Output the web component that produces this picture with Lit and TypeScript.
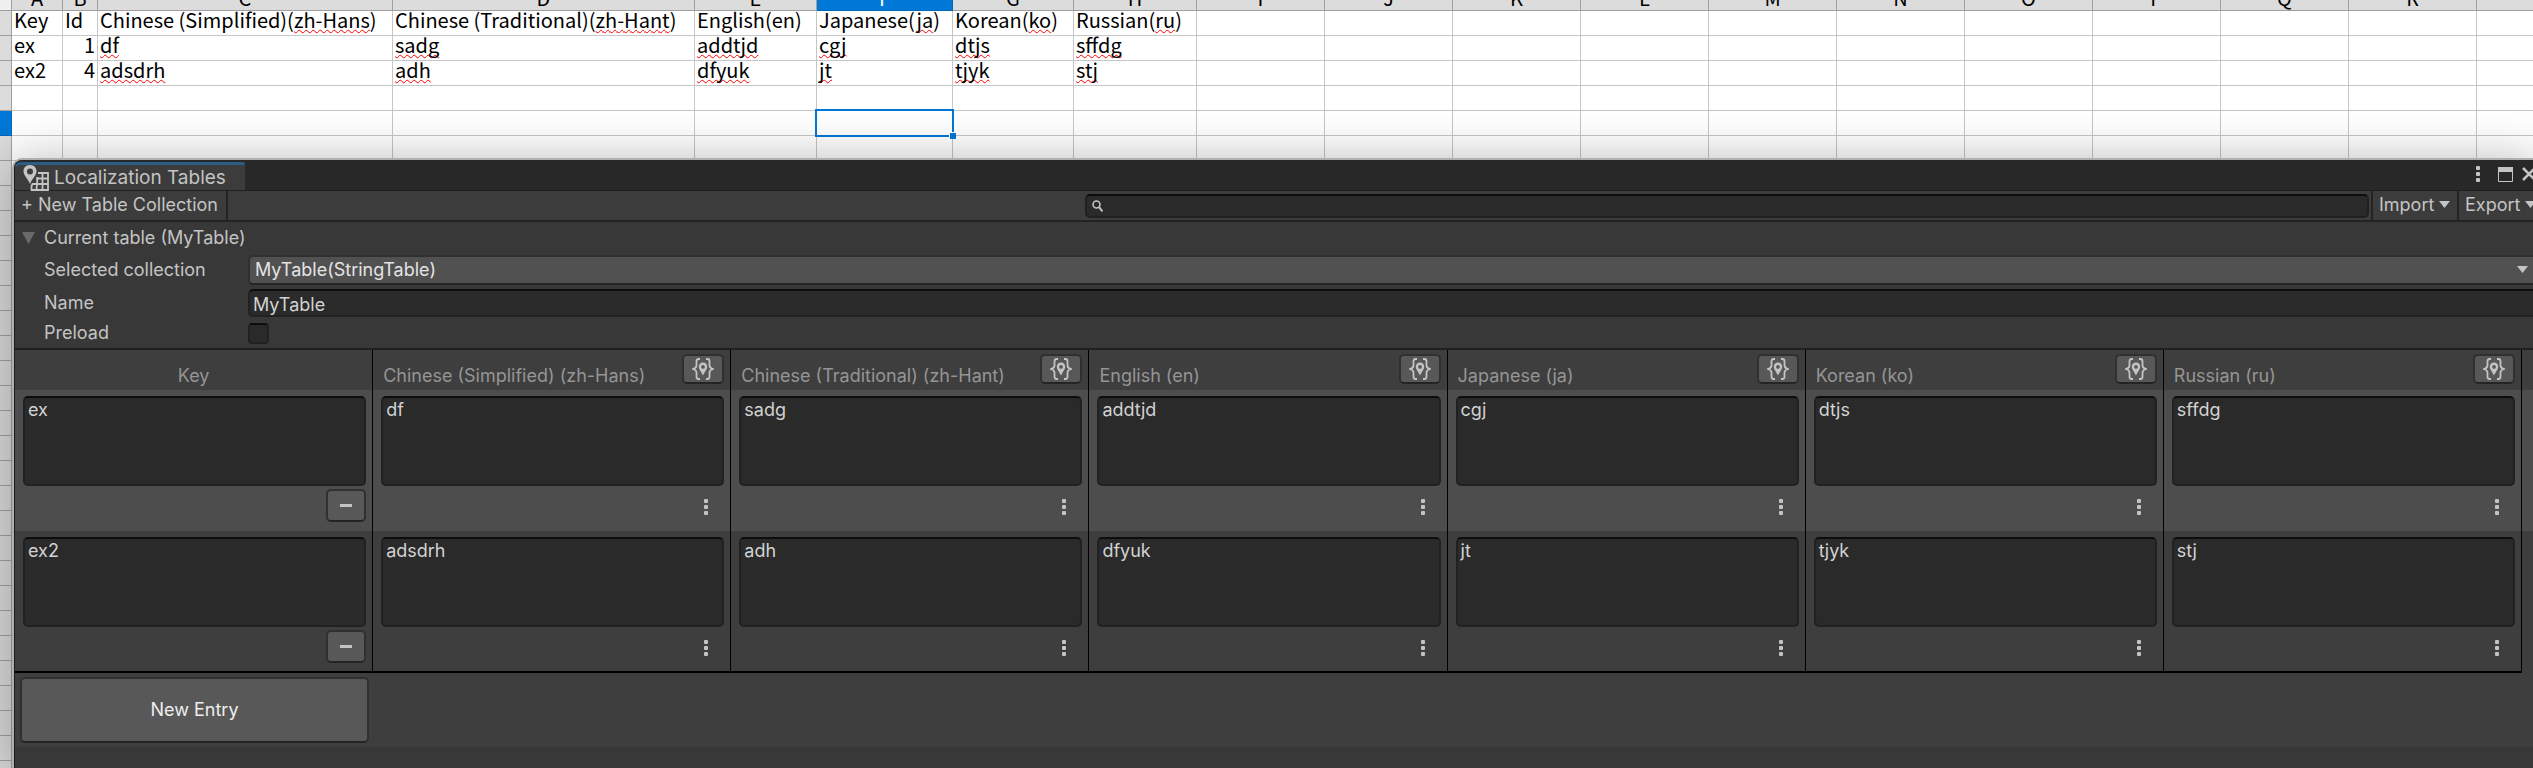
import { LitElement, html, css, svg } from "lit";
import { customElement } from "lit/decorators.js";
import { classMap } from "lit/directives/class-map.js";

type Col = { letter: string; width: number };

const COLUMNS: Col[] = [
  { letter: "A", width: 51 },
  { letter: "B", width: 35 },
  { letter: "C", width: 295 },
  { letter: "D", width: 302 },
  { letter: "E", width: 122 },
  { letter: "F", width: 136 },
  { letter: "G", width: 121 },
  { letter: "H", width: 123 },
  ..."IJKLMNOPQRS".split("").map((letter) => ({ letter, width: 128 })),
];

// Each cell is [plain part, misspelt part, plain tail].
const CELLS: string[][][] = [
  [["Key"], ["Id"], ["Chinese (Simplified)(", "zh-Hans", ")"], ["Chinese (Traditional)(", "zh-Hant", ")"], ["English(en)"], ["Japanese(", "ja", ")"], ["Korean(", "ko", ")"], ["Russian(", "ru", ")"]],
  [["ex"], ["1"], ["", "df"], ["", "sadg"], ["", "addtjd"], ["", "cgj"], ["", "dtjs"], ["", "sffdg"]],
  [["ex2"], ["4"], ["", "adsdrh"], ["", "adh"], ["", "dfyuk"], ["", "jt"], ["", "tjyk"], ["", "stj"]],
];
const ROW_COUNT = 31;
const ACTIVE_ROW = 4;
const ACTIVE_COL = 5;

@customElement("sheet-view")
export class SheetView extends LitElement {
  static styles = css`
    :host {
      display: block;
      color: #000;
      font: 20px/18px "Noto Sans CJK SC", "Noto Sans", sans-serif;
    }
    .clip { overflow: hidden; }
    table {
      border-collapse: separate;
      border-spacing: 0;
      table-layout: fixed;
      width: 0;
      margin-top: -14px;
    }
    th, td { padding: 0; height: 24px; box-sizing: content-box; font-weight: 400; white-space: nowrap; vertical-align: top; }
    th { background: #dcdcdc; border-right: 1px solid #a0a0a0; border-bottom: 1px solid #a0a0a0; vertical-align: middle; }
    thead th:first-child { background: #f0f0f0; }
    td { background: #fff; border-right: 1px solid #c6c6c6; border-bottom: 1px solid #c6c6c6; }
    .text { padding: 0 2px; }
    .number { text-align: right; padding: 0 2px; }
    .current { background: #0078d7; color: #fff; border-color: #0067b8; }
    .bad {
      text-decoration: underline wavy #f00 1px;
      text-decoration-skip-ink: none;
      text-underline-offset: 1px;
    }
    .active { position: relative; }
    .cursor {
      position: absolute;
      inset: -2px;
      border: 2px solid #0078d7;
    }
    .grip {
      position: absolute;
      right: -4px;
      bottom: -4px;
      width: 6px;
      height: 6px;
      background: #0078d7;
      border: solid #fff;
      border-width: 1px 0 0 1px;
    }
  `;

  private cell(row: number, col: number) {
    if (row === ACTIVE_ROW && col === ACTIVE_COL) {
      return html`<td class="active"><div class="cursor"><span class="grip"></span></div></td>`;
    }
    const parts = CELLS[row]?.[col];
    if (!parts) return html`<td></td>`;
    const number = col === 1 && row > 0;
    return html`<td class=${number ? "number" : "text"}>${parts[0]}${parts[1] ? html`<span class="bad">${parts[1]}</span>` : ""}${parts[2] ?? ""}</td>`;
  }

  render() {
    return html`<div class="clip"><table>
      <colgroup><col style="width:12px" />${COLUMNS.map((c) => html`<col style="width:${c.width}px" />`)}</colgroup>
      <thead><tr><th></th>${COLUMNS.map((c, i) => html`<th scope="col" class=${classMap({ current: i === ACTIVE_COL })}>${c.letter}</th>`)}</tr></thead>
      <tbody>${Array.from({ length: ROW_COUNT }, (_, r) => html`<tr>
        <th scope="row" class=${classMap({ current: r === ACTIVE_ROW })}></th>${COLUMNS.map((_c, c) => this.cell(r, c))}
      </tr>`)}</tbody>
    </table></div>`;
  }
}

const LOCALES = ["Chinese (Simplified) (zh-Hans)", "Chinese (Traditional) (zh-Hant)", "English (en)", "Japanese (ja)", "Korean (ko)", "Russian (ru)"];
const ENTRIES = [
  { key: "ex", values: ["df", "sadg", "addtjd", "cgj", "dtjs", "sffdg"] },
  { key: "ex2", values: ["adsdrh", "adh", "dfyuk", "jt", "tjyk", "stj"] },
];

const moreIcon = html`<svg class="more-icon" width="4" height="16" viewBox="0 0 4 16" fill="#c4c4c4"><rect width="4" height="4" rx="1" /><rect y="6" width="4" height="4" rx="1" /><rect y="12" width="4" height="4" rx="1" /></svg>`;
const downIcon = html`<svg width="11" height="7" viewBox="0 0 11 7" fill="#c4c4c4"><path d="M0 0h11L5.500 7z" /></svg>`;
const pin = svg`<path fill-rule="evenodd" d="M11 4.500c-2.600 0-4.200 1.900-4.200 4.200 0 2.900 2.500 5 4.200 8.800 1.700-3.800 4.200-5.900 4.200-8.800 0-2.300-1.600-4.200-4.200-4.200zm0 2.500a1.900 1.900 0 1 1 0 3.800 1.900 1.900 0 0 1 0-3.800z" />`;
const localeIcon = html`<svg width="22" height="22" viewBox="0 0 22 22" fill="#c4c4c4">
  ${pin}
  <path fill="none" stroke="#c4c4c4" stroke-width="1.800" d="M8 1H6.500Q4.500 1 4.500 3.500V7.500q0 2.500-3.500 3.500 3.500 1 3.500 3.500v4Q4.500 21 6.500 21H8M14 1h1.500q2 0 2 2.500v4q0 2.500 3.500 3.500-3.500 1-3.500 3.500v4q0 2.500-2 2.500H14" />
</svg>`;
const tabIcon = html`<svg width="26" height="26" viewBox="0 0 26 26">
  <path fill="#c4c4c4" fill-rule="evenodd" d="M7 0C3 0 .500 2.800.500 6.300.500 10.500 4.500 13 7 19c2.500-6 6.500-8.500 6.500-12.700C13.500 2.800 11 0 7 0zm0 3.500a3 3 0 1 1 0 6 3 3 0 0 1 0-6z" />
  <path fill="none" stroke="#c4c4c4" stroke-width="1.800" d="M15 8h10v17H8.500v-4l1-2H25M13 13.500h12M19.500 8v17M14.500 12l-1 13" />
</svg>`;

@customElement("tables-window")
export class TablesWindow extends LitElement {
  static styles = css`
    :host {
      display: flex;
      flex-direction: column;
      background: #383838;
      color: #c4c4c4;
      font: 18px/24px Inter, sans-serif;
      border-left: 1px solid #1c1c1c;
      border-top-left-radius: 8px;
    }
    * { box-sizing: border-box; }
    button, input, select, textarea { font: inherit; color: inherit; margin: 0; }
    button { display: flex; align-items: center; justify-content: center; padding: 0; border: 0; background: none; }
    svg { display: block; flex: none; }

    .titlebar {
      display: flex;
      align-items: flex-end;
      height: 31px;
      background: #282828;
      border-bottom: 1px solid #202020;
      border-top-left-radius: 8px;
    }
    .tab {
      display: flex;
      align-items: center;
      gap: 5px;
      width: 230px;
      height: 28px;
      padding-left: 8px;
      background: #3c3c3c;
      border-top: 3px solid #2c5d87;
      border-radius: 6px 2px 0 0;
      font-size: 19px;
      white-space: nowrap;
    }
    .window-tools { display: flex; align-items: center; align-self: flex-start; height: 28px; margin-left: auto; }
    .window-menu { margin-right: 18px; }
    .maximize { margin-right: 9px; }

    .toolbar {
      display: flex;
      height: 31px;
      background: #3c3c3c;
      border-bottom: 2px solid #232323;
    }
    .toolbar button { justify-content: flex-start; padding: 0 0 2px 6px; }
    .new-table { width: 213px; border-right: 2px solid #232323; white-space: nowrap; }
    .search {
      display: flex;
      align-items: center;
      flex: 0 1 1284px;
      height: 24px;
      margin: 3px 2px 0 auto;
      padding: 0 5px;
      background: #2a2a2a;
      border: 2px solid #212121;
      border-top-color: #0d0d0d;
      border-radius: 5px;
    }
    .search input { flex: 1; min-width: 0; height: 20px; border: 0; background: none; outline: 0; }
    .menu { flex: none; gap: 5px; width: 86px; border-left: 2px solid #232323; }
    .menu:last-child { width: 76px; overflow: hidden; }

    .settings { display: flex; flex-direction: column; padding-bottom: 3px; border-bottom: 2px solid #202020; }
    .foldout { justify-content: flex-start; gap: 9px; height: 33px; padding: 0 0 2px 7px; }
    .field { display: grid; grid-template-columns: 204px 1fr; padding-left: 29px; align-items: center; }
    .select-wrap { position: relative; }
    .select-wrap svg { position: absolute; right: 5px; top: 11px; pointer-events: none; }
    .field select {
      display: block;
      appearance: none;
      width: 100%;
      height: 30px;
      padding: 0 5px;
      background: #515151;
      color: #e4e4e4;
      border: 2px solid #303030;
      border-bottom-color: #242424;
      border-right: 0;
      border-radius: 5px 0 0 5px;
    }
    .field .name {
      width: 100%;
      height: 28px;
      margin: 4px 0;
      padding: 2px 3px 0;
      background: #2a2a2a;
      color: #d2d2d2;
      border: 2px solid #212121;
      border-top-color: #0d0d0d;
      border-right: 0;
      border-radius: 5px 0 0 5px;
    }
    .check {
      appearance: none;
      width: 21px;
      height: 21px;
      background: #2a2a2a;
      border: 2px solid #212121;
      border-top-color: #0d0d0d;
      border-radius: 4px;
    }

    .grid-area { background: #3e3e3e; }
    table { width: 100%; border-collapse: separate; border-spacing: 0; table-layout: fixed; }
    th, td { padding: 0; text-align: left; vertical-align: top; font-weight: 400; }
    .cell { border-right: 1px solid #000; }
    thead th { height: 40px; color: #959595; }
    .head { display: flex; justify-content: space-between; padding: 4px 6px 0 10px; }
    .head-label { padding-top: 10px; white-space: nowrap; }
    .key-head { justify-content: center; padding: 4px 6px 0; }
    .button {
      background: #585858;
      border: 2px solid #303030;
      border-bottom-color: #242424;
      border-radius: 5px;
      color: #eee;
    }
    .locale-button { width: 42px; height: 30px; }
    .odd { background: #4d4d4d; }
    .entry { display: flex; flex-direction: column; height: 141px; padding: 6px 6px 0 8px; gap: 3px; }
    .last .entry { height: 140px; }
    textarea {
      display: block;
      width: 100%;
      height: 90px;
      padding: 0 3px;
      resize: none;
      background: #2a2a2a;
      color: #d2d2d2;
      border: 2px solid #212121;
      border-top-color: #0d0d0d;
      border-radius: 5px;
    }
    .remove { align-self: flex-end; width: 40px; height: 33px; }
    .minus { width: 12px; height: 3px; background: #c4c4c4; }
    .more { align-self: flex-end; width: 36px; height: 36px; }
    .last .cell { border-bottom: 2px solid #000; }
    .footer { height: 74px; padding: 4px 0 0 5px; background: #3e3e3e; }
    .new-entry { width: 349px; height: 66px; }
  `;

  render() {
    return html`
      <div class="titlebar">
        <div class="tab">${tabIcon}<span>Localization Tables</span></div>
        <div class="window-tools">
          <button class="window-menu" aria-label="Window menu">${moreIcon}</button>
          <button class="maximize" aria-label="Maximize"><svg width="15" height="15" viewBox="0 0 15 15"><path fill="none" stroke="#c4c4c4" d="M.500.500h14v14H.500z" /><path fill="#c4c4c4" d="M0 0h15v5H0z" /></svg></button>
          <button aria-label="Close"><svg width="11" height="14" viewBox="0 0 11 14"><path fill="none" stroke="#c4c4c4" stroke-width="2.500" d="m1 1 12 12M13 1 1 13" /></svg></button>
        </div>
      </div>
      <div class="toolbar">
        <button class="new-table">+ New Table Collection</button>
        <label class="search"><svg width="11" height="12" viewBox="0 0 11 12" fill="none" stroke="#c4c4c4"><circle cx="4.500" cy="4.500" r="3.500" stroke-width="1.600" /><path stroke-width="2" d="m7 7 3.500 4.500" /></svg><input type="text" aria-label="Search" /></label>
        <button class="menu">Import ${downIcon}</button>
        <button class="menu">Export ${downIcon}</button>
      </div>
      <div class="settings">
        <button class="foldout"><svg width="13" height="12" viewBox="0 0 13 12"><path fill="#6a6a6a" d="M0 0h13L6.500 12z" /></svg>Current table (MyTable)</button>
        <div class="field"><label for="collection">Selected collection</label>
          <div class="select-wrap"><select id="collection"><option>MyTable(StringTable)</option></select>${downIcon}</div></div>
        <div class="field"><label for="name">Name</label><input id="name" class="name" type="text" .value=${"MyTable"} /></div>
        <div class="field"><label for="preload">Preload</label><input id="preload" class="check" type="checkbox" /></div>
      </div>
      <div class="grid-area">
        <table>
          <colgroup>${[0, ...LOCALES].map(() => html`<col />`)}<col style="width:11px" /></colgroup>
          <thead><tr>
            <th class="cell" scope="col"><div class="head key-head"><span class="head-label">Key</span></div></th>
            ${LOCALES.map((name) => html`<th class="cell" scope="col"><div class="head"><span class="head-label">${name}</span><button class="button locale-button" aria-label=${name}>${localeIcon}</button></div></th>`)}
            <td></td>
          </tr></thead>
          <tbody>${ENTRIES.map((entry, i) => html`<tr class=${classMap({ odd: i % 2 === 0, last: i === ENTRIES.length - 1 })}>
            <td class="cell"><div class="entry"><textarea aria-label="Key" .value=${entry.key}></textarea><button class="button remove" aria-label="Remove"><span class="minus"></span></button></div></td>
            ${entry.values.map((value, c) => html`<td class="cell"><div class="entry"><textarea aria-label=${LOCALES[c]} .value=${value}></textarea><button class="more" aria-label="Entry menu">${moreIcon}</button></div></td>`)}
            <td></td>
          </tr>`)}</tbody>
        </table>
      </div>
      <div class="footer"><button class="button new-entry">New Entry</button></div>
    `;
  }
}

@customElement("app-root")
export class AppRoot extends LitElement {
  static styles = css`
    :host { display: block; position: relative; height: 100vh; overflow: hidden; background: #fff; }
    .window {
      position: absolute;
      inset: 160px 0 0 14px;
      box-shadow: 0 0 0 2px #b0b0b0, 0 6px 50px 6px rgba(0, 0, 0, 0.28);
    }
  `;

  render() {
    return html`<sheet-view></sheet-view><tables-window class="window"></tables-window>`;
  }
}
